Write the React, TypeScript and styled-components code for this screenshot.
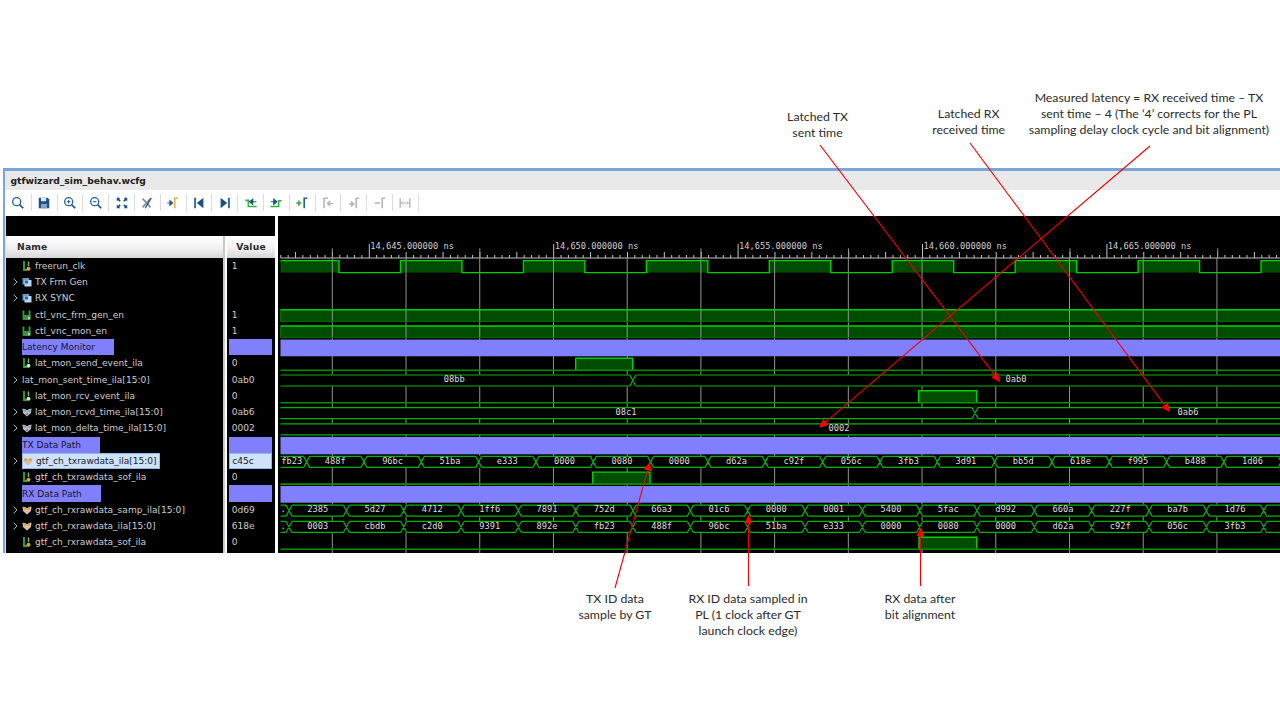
import * as React from "react";
import styled, { createGlobalStyle } from "styled-components";

const UI_FONT = `"DejaVu Sans", Verdana, sans-serif`;
const MONO_FONT = `"DejaVu Sans Mono", monospace`;
const NOTE_FONT = `Lato, "Open Sans", sans-serif`;
const ROW_H = 16.27;

const GlobalStyle = createGlobalStyle`
  html, body {
    margin: 0;
    padding: 0;
    background: #fff;
  }
`;

const Page = styled.div`
  position: relative;
  width: 1280px;
  height: 720px;
  overflow: hidden;
  background: #fff;
  padding: 168px 0 0 3px;
  box-sizing: border-box;
`;

const Window = styled.div`
  height: 385px;
  display: flex;
  flex-direction: column;
  border-top: 3px solid #7ba6da;
  border-left: 2px solid #7ba6da;
  box-sizing: border-box;
`;

const TitleBar = styled.div`
  height: 19px;
  flex: none;
  display: flex;
  align-items: center;
  padding-left: 5.5px;
  background: #e9e9e9;
  font: bold 9.2px ${UI_FONT};
  color: #222;
`;

const Toolbar = styled.div`
  height: 25.7px;
  flex: none;
  display: flex;
  align-items: center;
  padding-left: 1px;
  background: #fff;
`;

const ToolButton = styled.div`
  width: 25.8px;
  height: 17px;
  flex: none;
  display: flex;
  align-items: center;
  justify-content: center;
  border-right: 1px solid #dcdcdc;
  box-sizing: border-box;
`;

const Body = styled.div`
  flex: 1;
  min-height: 0;
  display: flex;
  background: #000;
  border-left: 1px solid #e0e0e0;
`;

const LeftBlock = styled.div`
  width: 269px;
  flex: none;
  display: flex;
  flex-direction: column;
`;

const TopGap = styled.div`
  height: 20.3px;
  flex: none;
`;

const Columns = styled.div`
  flex: 1;
  min-height: 0;
  display: flex;
`;

const NamePane = styled.div`
  width: 217px;
  flex: none;
`;

const ValuePane = styled.div`
  width: 48px;
  flex: none;
`;

const Sash = styled.div`
  width: 4px;
  flex: none;
  background: #fff;
  border-left: 2px solid #c8c8c8;
  box-sizing: border-box;
`;

const WhiteSash = styled.div`
  width: 3px;
  flex: none;
  background: #fff;
`;

const WavePane = styled.div`
  flex: 1;
  min-width: 0;
`;

const HeaderCell = styled.div<{ $center?: boolean }>`
  height: 21.7px;
  display: flex;
  align-items: center;
  box-sizing: border-box;
  padding-left: ${(p) => (p.$center ? "0" : "11px")};
  padding-right: ${(p) => (p.$center ? "0" : "0")};
  justify-content: ${(p) => (p.$center ? "center" : "flex-start")};
  background: linear-gradient(#ffffff, #f2f2f2 55%, #d6d6d6);
  font: bold 9.2px ${UI_FONT};
  letter-spacing: 0.2px;
  color: #2a2a2a;
`;

const Row = styled.div`
  height: ${ROW_H}px;
  display: flex;
  align-items: center;
  font: 9.05px ${UI_FONT};
  color: #cdcdcd;
  white-space: nowrap;
`;

const ChevronSlot = styled.div`
  width: 16px;
  flex: none;
  display: flex;
  justify-content: flex-end;
  padding-right: 4px;
  box-sizing: border-box;
`;

const NameLabel = styled.div<{ $selected?: boolean; $group?: boolean }>`
  display: flex;
  align-items: center;
  gap: 3px;
  height: ${ROW_H}px;
  box-sizing: border-box;
  ${(p) => p.$group && "background: #8080ff; color: #17172e; width: var(--w);"}
  ${(p) =>
    p.$selected &&
    "background: #cfe2fb; color: #16202c; border: 1px solid #8fb9de; padding-right: 2px;"}
`;

const RowIcon = styled.svg`
  width: 10px;
  height: 12px;
  flex: none;
`;

const ValueCell = styled.div<{ $selected?: boolean; $group?: boolean }>`
  width: 43px;
  height: ${ROW_H}px;
  margin-left: 2.3px;
  padding-left: 2.5px;
  display: flex;
  align-items: center;
  box-sizing: border-box;
  ${(p) => p.$group && "background: #8080ff;"}
  ${(p) =>
    p.$selected &&
    "background: #cfe2fb; color: #16202c; border: 1px solid #8fb9de; padding-left: 2px;"}
`;

const WaveSvg = styled.svg`
  display: block;
`;

const WaveText = styled.text<{ $ruler?: boolean }>`
  font: 8.7px ${MONO_FONT};
  fill: ${(p) => (p.$ruler ? "#cfcfcf" : "#dedede")};
`;

const ArrowLayer = styled.svg`
  position: absolute;
  inset: 0;
  width: 1280px;
  height: 720px;
  pointer-events: none;
`;

const Callout = styled.div<{ $x: number; $y: number }>`
  position: absolute;
  left: ${(p) => p.$x - 150}px;
  top: ${(p) => p.$y}px;
  width: 300px;
  text-align: center;
  font: 12.3px/16px ${NOTE_FONT};
  color: #2b2b2b;
`;

// ----- name column data -----

type RowData = {
  name: string;
  value?: string;
  icon?: "sig" | "sigWhite" | "sigDouble" | "group" | "bus" | "busOrange";
  expand?: boolean;
  divider?: number;
  selected?: boolean;
};

const rows: RowData[] = [
  { name: "freerun_clk", value: "1", icon: "sig" },
  { name: "TX Frm Gen", icon: "group", expand: true },
  { name: "RX SYNC", icon: "group", expand: true },
  { name: "ctl_vnc_frm_gen_en", value: "1", icon: "sigDouble" },
  { name: "ctl_vnc_mon_en", value: "1", icon: "sigDouble" },
  { name: "Latency Monitor", divider: 91.5 },
  { name: "lat_mon_send_event_ila", value: "0", icon: "sigWhite" },
  { name: "lat_mon_sent_time_ila[15:0]", value: "0ab0", expand: true },
  { name: "lat_mon_rcv_event_ila", value: "0", icon: "sigWhite" },
  { name: "lat_mon_rcvd_time_ila[15:0]", value: "0ab6", icon: "bus", expand: true },
  { name: "lat_mon_delta_time_ila[15:0]", value: "0002", icon: "bus", expand: true },
  { name: "TX Data Path", divider: 78 },
  { name: "gtf_ch_txrawdata_ila[15:0]", value: "c45c", icon: "busOrange", expand: true, selected: true },
  { name: "gtf_ch_txrawdata_sof_ila", value: "0", icon: "sig" },
  { name: "RX Data Path", divider: 79 },
  { name: "gtf_ch_rxrawdata_samp_ila[15:0]", value: "0d69", icon: "busOrange", expand: true },
  { name: "gtf_ch_rxrawdata_ila[15:0]", value: "618e", icon: "busOrange", expand: true },
  { name: "gtf_ch_rxrawdata_sof_ila", value: "0", icon: "sig" },
];

function SignalGlyph({ kind }: { kind: NonNullable<RowData["icon"]> }) {
  if (kind === "group") {
    return (
      <RowIcon viewBox="0 0 10 12">
        <rect x="0.5" y="2" width="6.5" height="6.5" fill="#5d9bd0" />
        <rect x="2.5" y="4" width="7" height="6.5" fill="#b9d6ee" />
        <rect x="3" y="4.5" width="3" height="3" fill="#2f6ea5" />
      </RowIcon>
    );
  }
  if (kind === "bus" || kind === "busOrange") {
    const dot = kind === "bus" ? "#7da2c4" : "#f0a030";
    return (
      <RowIcon viewBox="0 0 10 12">
        <path d="M0.5 2.5 L4 3.5 L5 4.5 L6 3.5 L9.5 2.5 L9 7 L5 10.5 L1 7 Z" fill="#c9c9c9" />
        <circle cx="2.8" cy="4.8" r="1.5" fill={dot} />
        <circle cx="7.2" cy="4.8" r="1.5" fill={dot} />
        <circle cx="5" cy="8" r="1.4" fill={kind === "bus" ? "#8a8a8a" : "#e8c070"} />
      </RowIcon>
    );
  }
  if (kind === "sigDouble") {
    return (
      <RowIcon viewBox="0 0 10 12">
        <path d="M1.5 1.5 V10 M7.5 1.5 V10" stroke="#2fa83a" strokeWidth="1.8" />
        <rect x="1" y="6" width="7.5" height="5" fill="#3f8f45" />
        <circle cx="7" cy="9" r="1.2" fill="#c9c9c9" />
      </RowIcon>
    );
  }
  const dot = kind === "sig" ? "#f09a2a" : "#d8d8d8";
  return (
    <RowIcon viewBox="0 0 10 12">
      <path d="M2 1 V10 H5" fill="none" stroke="#2fa83a" strokeWidth="1.8" />
      <path d="M6.5 1.5 V6" stroke="#7cc070" strokeWidth="1.4" />
      <circle cx="6.5" cy="8.8" r="2" fill={dot} />
    </RowIcon>
  );
}

function Chevron() {
  return (
    <svg width="5" height="8" viewBox="0 0 5 8">
      <path d="M0.7 0.7 L4 4 L0.7 7.3" fill="none" stroke="#b4b4b4" strokeWidth="1" />
    </svg>
  );
}

// ----- toolbar -----

const B = "#1f5f9f";
const NAVY = "#1c4f86";
const G = "#32b03a";
const O = "#e8b64a";
const GR = "#b5b5b5";

const Magnifier = ({ sign }: { sign?: "+" | "-" }) => (
  <>
    <circle cx="6.5" cy="6.5" r="4.6" fill="none" stroke={B} strokeWidth="1.5" />
    <path d="M10 10 L14 14" stroke={NAVY} strokeWidth="2" />
    {sign && <path d="M4.5 6.5 H8.5" stroke={B} strokeWidth="1.2" />}
    {sign === "+" && <path d="M6.5 4.5 V8.5" stroke={B} strokeWidth="1.2" />}
  </>
);

const tools: React.ReactNode[] = [
  <Magnifier key="find" />,
  <g key="save">
    <path d="M2 2 H12 L14 4 V14 H2 Z" fill={NAVY} />
    <rect x="4.5" y="2" width="6" height="4" fill="#dfe9f3" />
    <rect x="4.5" y="9" width="7" height="5" fill="#7fa4c8" />
  </g>,
  <Magnifier key="in" sign="+" />,
  <Magnifier key="out" sign="-" />,
  <path
    key="fit"
    d="M2 2 L6 2 L4.8 3.4 L6.6 5.2 L5.2 6.6 L3.4 4.8 L2 6 Z M14 2 L14 6 L12.6 4.8 L10.8 6.6 L9.4 5.2 L11.2 3.4 L10 2 Z M2 14 L2 10 L3.4 11.2 L5.2 9.4 L6.6 10.8 L4.8 12.6 L6 14 Z M14 14 L10 14 L11.2 12.6 L9.4 10.8 L10.8 9.4 L12.6 11.2 L14 10 Z"
    fill={NAVY}
  />,
  <g key="swap">
    <path d="M3 3 L12 13 M12 3 L3 13" stroke="#7f8a96" strokeWidth="1.8" />
    <path d="M13 2 L6 14" stroke={NAVY} strokeWidth="1.4" />
  </g>,
  <g key="cursor">
    <path d="M1.5 8 H6 M4.5 5.5 L7.5 8 L4.5 10.5 Z" stroke={B} fill={B} strokeWidth="1.4" />
    <path d="M13.5 2.5 H10 V14" fill="none" stroke={O} strokeWidth="2" />
  </g>,
  <g key="first">
    <rect x="2.5" y="2" width="2" height="12" fill={B} />
    <path d="M13 2 V14 L5.5 8 Z" fill={NAVY} />
  </g>,
  <g key="last">
    <rect x="11.5" y="2" width="2" height="12" fill={B} />
    <path d="M3 2 V14 L10.5 8 Z" fill={NAVY} />
  </g>,
  <g key="prev">
    <path d="M1.5 5 H5 V12 H14.5" fill="none" stroke={G} strokeWidth="1.8" />
    <path d="M14 6.5 H9 M10 3.5 L6.5 6.5 L10 9.5 Z" stroke={NAVY} fill={NAVY} strokeWidth="1.2" />
  </g>,
  <g key="next">
    <path d="M1.5 12 H11 V5.5 H14.5" fill="none" stroke={G} strokeWidth="1.8" />
    <path d="M2 6.5 H6 M5.5 3.5 L9 6.5 L5.5 9.5 Z" stroke={NAVY} fill={NAVY} strokeWidth="1.2" />
  </g>,
  <g key="add">
    <path d="M1.5 8 H7.5 M4.5 5 V11" stroke={G} strokeWidth="1.8" />
    <path d="M14 2.5 H10.5 V14" fill="none" stroke={B} strokeWidth="1.8" />
  </g>,
  <g key="g1">
    <path d="M8 2.5 H3.5 V14" fill="none" stroke={GR} strokeWidth="1.8" />
    <path d="M14 8.5 H9.5 M10 6 L7 8.5 L10 11 Z" stroke={GR} fill={GR} strokeWidth="1.2" />
  </g>,
  <g key="g2">
    <path d="M14 2.5 H10.5 V14" fill="none" stroke={GR} strokeWidth="1.8" />
    <path d="M2 9 H6 M5 6.5 L8 9 L5 11.5 Z" stroke={GR} fill={GR} strokeWidth="1.2" />
  </g>,
  <g key="g3">
    <path d="M14 2.5 H10.5 V14" fill="none" stroke={GR} strokeWidth="1.8" />
    <path d="M2 8 H8" stroke={GR} strokeWidth="1.8" />
  </g>,
  <g key="g4">
    <path d="M2.5 2.5 V13.5 M13.5 2.5 V13.5" stroke={GR} strokeWidth="1.6" />
    <path d="M4 8 H12 M6 6 L4 8 L6 10 M10 6 L12 8 L10 10" fill="none" stroke={GR} strokeWidth="1.1" />
  </g>,
];

// ----- waveform -----

const LEFT = 280.5;
const RIGHT = 1280;
const rowTop = (k: number) => 260.3 + ROW_H * k;
const BUS_H = 12;
const SLANT = 3;
const STEP = 57.33;
const BUS_GREEN = "#00b400";
const BRIGHT = "#00d000";
const FILL = "#004c00";

const GRID = Array.from({ length: 13 }, (_, i) => 332.3 + 73.72 * i);
const TALL_GRID = [332.3, 479.8, 701, 848.5, 1070, 1217.7];
const MAJOR = [
  { x: 369.3, t: "14,645.000000 ns" },
  { x: 553.7, t: "14,650.000000 ns" },
  { x: 738, t: "14,655.000000 ns" },
  { x: 922.4, t: "14,660.000000 ns" },
  { x: 1106.8, t: "14,665.000000 ns" },
];

const clockEdges = Array.from({ length: 16 }, (_, i) => 339 + 61.47 * i);

function clockPath() {
  const y0 = rowTop(0);
  const y1 = y0 + BUS_H;
  let d = `M${LEFT} ${y0}`;
  let high = true;
  clockEdges.forEach((x) => {
    d += ` H${x} V${high ? y1 : y0}`;
    high = !high;
  });
  return d + ` H${RIGHT}`;
}

function clockFill() {
  const y0 = rowTop(0);
  const spans: [number, number][] = [];
  let start = LEFT;
  clockEdges.forEach((x, i) => {
    if (i % 2 === 0) spans.push([start, x]);
    else start = x;
  });
  spans.push([start, RIGHT]);
  return spans.map(([a, b]) => (
    <rect key={a} x={a} y={y0} width={b - a} height={BUS_H} fill={FILL} />
  ));
}

function Level({ k }: { k: number }) {
  return <rect x={LEFT} y={rowTop(k)} width={RIGHT - LEFT} height={BUS_H} fill={FILL} />;
}

function LevelLines({ k }: { k: number }) {
  const y = rowTop(k);
  return (
    <>
      <path d={`M${LEFT} ${y + 0.3} H${RIGHT}`} stroke={BRIGHT} strokeWidth="1.6" />
      <path d={`M${LEFT} ${y + BUS_H} H${RIGHT}`} stroke="#007000" strokeWidth="1" />
      <path d={`M${LEFT} ${y} V${y + BUS_H}`} stroke="#007000" strokeWidth="1" />
    </>
  );
}

function Pulse({ k, from, to }: { k: number; from: number; to: number }) {
  const y0 = rowTop(k);
  const y1 = y0 + BUS_H;
  return (
    <>
      <rect x={from} y={y0} width={to - from} height={BUS_H} fill={FILL} />
      <path d={`M${from} ${y1} V${y0} H${to} V${y1}`} fill="none" stroke={BRIGHT} strokeWidth="1.4" />
      <path d={`M${LEFT} ${y1} H${RIGHT}`} stroke="#009000" strokeWidth="1.6" />
    </>
  );
}

type Segment = { text: string; at?: number };

function Bus({ k, edges, segs }: { k: number; edges: number[]; segs: Segment[] }) {
  const y0 = rowTop(k);
  const y1 = y0 + BUS_H;
  const bounds = [LEFT - SLANT, ...edges, RIGHT + SLANT + 10];
  let d = "";
  for (let i = 0; i < bounds.length - 1; i++) {
    const a = Math.max(bounds[i] + SLANT, LEFT);
    const b = bounds[i + 1] - SLANT;
    d += ` M${a} ${y0 + 0.5} H${b} M${a} ${y1 - 0.5} H${b}`;
  }
  edges.forEach((x) => {
    d += ` M${x - SLANT} ${y0 + 0.5} L${x + SLANT} ${y1 - 0.5} M${x - SLANT} ${y1 - 0.5} L${x + SLANT} ${y0 + 0.5}`;
  });
  return (
    <>
      <rect x={LEFT} y={y0} width={RIGHT - LEFT} height={BUS_H} fill="#000" />
      <path d={d} fill="none" stroke={BUS_GREEN} strokeWidth="1.2" />
      {segs.map((s, i) => {
        const c = s.at ?? (bounds[i] + bounds[i + 1]) / 2;
        return (
          <WaveText key={i} x={c} y={y0 + 7.8} textAnchor="middle">
            {s.text}
          </WaveText>
        );
      })}
    </>
  );
}

const txEdges = Array.from({ length: 18 }, (_, i) => 306.6 + STEP * i);
const rxEdges = Array.from({ length: 18 }, (_, i) => 289 + STEP * i);

const txValues = "fb23 488f 96bc 51ba e333 0000 0080 0000 d62a c92f 056c 3fb3 3d91 bb5d 618e f995 b488 1d06".split(" ");
const sampValues = ". 2385 5d27 4712 1ff6 7891 752d 66a3 01c6 0000 0001 5400 5fac d992 660a 227f ba7b 1d76".split(" ");
const rxValues = ". 0003 cbdb c2d0 9391 892e fb23 488f 96bc 51ba e333 0000 0080 0000 d62a c92f 056c 3fb3".split(" ");

const firstAt = (vals: string[], at: number): Segment[] =>
  vals.map((text, i) => (i === 0 ? { text, at } : { text }));

function Ruler() {
  const ticks = [];
  for (let i = -12; i < 125; i++) {
    const x = 369.3 + 7.376 * i;
    const h = i % 25 === 0 ? 14 : i % 5 === 0 ? 6 : 3;
    ticks.push(`M${x} 257.7 V${257.7 - h}`);
  }
  return (
    <>
      <path d={`M${LEFT} 257.7 H${RIGHT}`} stroke="#c4c4c4" strokeWidth="1" />
      <path d={ticks.join(" ")} stroke="#c4c4c4" strokeWidth="1" />
      {TALL_GRID.map((x) => (
        <path key={x} d={`M${x} 248 V258`} stroke="#9c9c9c" strokeWidth="1" />
      ))}
      {MAJOR.map((m) => (
        <WaveText key={m.x} $ruler x={m.x + 1} y={248.5}>
          {m.t}
        </WaveText>
      ))}
    </>
  );
}

function Waveforms() {
  return (
    <WaveSvg width="1002" height="337.3" viewBox="278 215.7 1002 337.3">
      <Ruler />
      {clockFill()}
      <Level k={3} />
      <Level k={4} />
      {GRID.map((x) => (
        <path key={x} d={`M${x} 258 V553`} stroke="#949494" strokeWidth="1" />
      ))}
      <path d={clockPath()} fill="none" stroke={BRIGHT} strokeWidth="1.4" />
      <LevelLines k={3} />
      <LevelLines k={4} />

      {[339.3, 436.7, 485.7].map((y) => (
        <rect key={y} x={LEFT} y={y} width={RIGHT - LEFT} height={y === 436.7 ? 17.3 : 16.7} fill="#8080ff" />
      ))}

      <Pulse k={6} from={575.7} to={632.7} />
      <Bus k={7} edges={[632.8]} segs={[{ text: "08bb", at: 454.3 }, { text: "0ab0", at: 1016 }]} />
      <Pulse k={8} from={918.7} to={976.6} />
      <Bus k={9} edges={[975]} segs={[{ text: "08c1", at: 626 }, { text: "0ab6", at: 1188 }]} />
      <Bus k={10} edges={[]} segs={[{ text: "0002", at: 839 }]} />
      <Bus k={12} edges={txEdges} segs={firstAt(txValues, 291.7)} />
      <Pulse k={13} from={592.7} to={650} />
      <Bus k={15} edges={rxEdges} segs={firstAt(sampValues, 283)} />
      <Bus k={16} edges={rxEdges} segs={firstAt(rxValues, 283)} />
      <Pulse k={17} from={919} to={976.7} />
    </WaveSvg>
  );
}

// ----- annotations -----

const arrows = [
  [820, 145, 1000, 382],
  [970, 143, 1170, 412.3],
  [1150, 146, 819, 427.7],
  [615, 588, 650, 461.7],
  [748.5, 586, 748.5, 514.3],
  [920.5, 586, 920.5, 527.3],
];

function Arrow({ line }: { line: number[] }) {
  const [x1, y1, x2, y2] = line;
  const len = Math.hypot(x2 - x1, y2 - y1);
  const ux = (x2 - x1) / len;
  const uy = (y2 - y1) / len;
  const bx = x2 - ux * 9;
  const by = y2 - uy * 9;
  const head = `${x2},${y2} ${bx - uy * 4},${by + ux * 4} ${bx + uy * 4},${by - ux * 4}`;
  return (
    <>
      <path d={`M${x1} ${y1} L${bx} ${by}`} stroke="#f00000" strokeWidth="1.1" />
      <polygon points={head} fill="#ff0000" />
    </>
  );
}

const callouts = [
  { x: 817.5, y: 109, lines: ["Latched TX", "sent time"] },
  { x: 968.7, y: 106, lines: ["Latched RX", "received time"] },
  {
    x: 1149,
    y: 90,
    lines: [
      "Measured latency = RX received time – TX",
      "sent time – 4 (The ‘4’ corrects for the PL",
      "sampling delay clock cycle and bit alignment)",
    ],
  },
  { x: 615, y: 591, lines: ["TX ID data", "sample by GT"] },
  {
    x: 748,
    y: 591,
    lines: ["RX ID data sampled in", "PL (1 clock after GT", "launch clock edge)"],
  },
  { x: 920, y: 591, lines: ["RX data after", "bit alignment"] },
];

export default function App() {
  return (
    <Page>
      <GlobalStyle />
      <Window>
        <TitleBar>gtfwizard_sim_behav.wcfg</TitleBar>
        <Toolbar>
          {tools.map((icon, i) => (
            <ToolButton key={i}>
              <svg width="14" height="14" viewBox="0 0 16 16">
                {icon}
              </svg>
            </ToolButton>
          ))}
        </Toolbar>
        <Body>
          <LeftBlock>
            <TopGap />
            <Columns>
              <NamePane>
                <HeaderCell>Name</HeaderCell>
                {rows.map((r) => (
                  <Row key={r.name + r.value}>
                    <ChevronSlot>{r.expand && <Chevron />}</ChevronSlot>
                    {r.divider ? (
                      <NameLabel $group style={{ "--w": `${r.divider}px` } as React.CSSProperties}>
                        {r.name}
                      </NameLabel>
                    ) : (
                      <NameLabel $selected={r.selected}>
                        {r.icon ? <SignalGlyph kind={r.icon} /> : null}
                        {r.name}
                      </NameLabel>
                    )}
                  </Row>
                ))}
              </NamePane>
              <Sash />
              <ValuePane>
                <HeaderCell $center>Value</HeaderCell>
                {rows.map((r) => (
                  <Row key={r.name + r.value}>
                    <ValueCell $selected={r.selected} $group={Boolean(r.divider)}>
                      {r.value}
                    </ValueCell>
                  </Row>
                ))}
              </ValuePane>
            </Columns>
          </LeftBlock>
          <WhiteSash />
          <WavePane>
            <Waveforms />
          </WavePane>
        </Body>
      </Window>
      <ArrowLayer viewBox="0 0 1280 720">
        {arrows.map((a) => (
          <Arrow key={a.join()} line={a} />
        ))}
      </ArrowLayer>
      {callouts.map((c) => (
        <Callout key={c.lines[0]} $x={c.x} $y={c.y}>
          {c.lines.map((l) => (
            <div key={l}>{l}</div>
          ))}
        </Callout>
      ))}
    </Page>
  );
}
